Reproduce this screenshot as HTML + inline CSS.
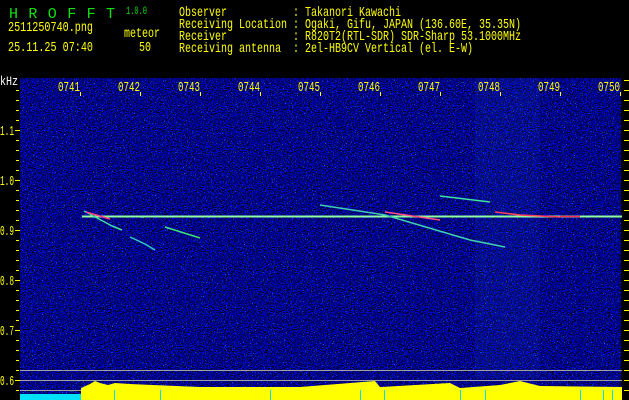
<!DOCTYPE html>
<html><head><meta charset="utf-8"><style>
html,body{margin:0;padding:0;background:#000;width:629px;height:400px;overflow:hidden}
svg{display:block}
text{font-family:"Liberation Mono","DejaVu Sans Mono",monospace;font-size:14px}
</style></head><body>
<svg width="629" height="400" xmlns="http://www.w3.org/2000/svg">
<defs>
<filter id="n" x="0" y="0" width="100%" height="100%">
<feTurbulence type="fractalNoise" baseFrequency="0.95" numOctaves="1" seed="3" result="t"/>
<feColorMatrix type="matrix" values="0 0 0 0 0.0  0 0 0 0 0.0  3.5 0 0 0 -1.45  0 0 0 0 1"/>
</filter>
<filter id="s" x="0" y="0" width="100%" height="100%">
<feTurbulence type="fractalNoise" baseFrequency="0.9" numOctaves="1" seed="11"/>
<feColorMatrix type="matrix" values="0 0 0 0 0  0 0 0 0 0.7  0 0 0 0 1  0 8 0 0 -5.2"/>
</filter>
</defs>
<rect x="20" y="78" width="601" height="322" fill="#03032a"/>
<rect x="20" y="78" width="601" height="322" filter="url(#n)"/>
<rect x="20" y="78" width="601" height="322" filter="url(#s)" opacity="0.8"/>
<rect x="475" y="78" width="65" height="300" fill="#3050d0" opacity="0.12"/>
<text x="9" y="18" fill="#10e010" style="font-size:15px" textLength="106" lengthAdjust="spacing">HROFFT</text>
<text x="126" y="14" fill="#10e010" style="font-size:11px" textLength="21" lengthAdjust="spacingAndGlyphs">1.0.0</text>
<g fill="#ffff00">
<text x="8" y="31" textLength="85" lengthAdjust="spacingAndGlyphs">2511250740.png</text>
<text x="8" y="51" textLength="85" lengthAdjust="spacingAndGlyphs">25.11.25 07:40</text>
<text x="124" y="37" textLength="36" lengthAdjust="spacingAndGlyphs">meteor</text>
<text x="139" y="51" textLength="12" lengthAdjust="spacingAndGlyphs">50</text>
<text x="179" y="16" textLength="48" lengthAdjust="spacingAndGlyphs">Observer</text><text x="293" y="16" textLength="108" lengthAdjust="spacingAndGlyphs">: Takanori Kawachi</text>
<text x="179" y="28" textLength="108" lengthAdjust="spacingAndGlyphs">Receiving Location</text><text x="293" y="28" textLength="228" lengthAdjust="spacingAndGlyphs">: Ogaki, Gifu, JAPAN (136.60E, 35.35N)</text>
<text x="179" y="40" textLength="48" lengthAdjust="spacingAndGlyphs">Receiver</text><text x="293" y="40" textLength="228" lengthAdjust="spacingAndGlyphs">: R820T2(RTL-SDR) SDR-Sharp 53.1000MHz</text>
<text x="179" y="52" textLength="102" lengthAdjust="spacingAndGlyphs">Receiving antenna</text><text x="293" y="52" textLength="180" lengthAdjust="spacingAndGlyphs">: 2el-HB9CV Vertical (el. E-W)</text>
</g>
<text x="0" y="85" fill="#fff" style="font-size:13px" textLength="18" lengthAdjust="spacingAndGlyphs">kHz</text>
<g fill="#ffff00" style="font-size:13px">
<text x="58" y="91" textLength="22" lengthAdjust="spacingAndGlyphs">0741</text><text x="118" y="91" textLength="22" lengthAdjust="spacingAndGlyphs">0742</text><text x="178" y="91" textLength="22" lengthAdjust="spacingAndGlyphs">0743</text><text x="238" y="91" textLength="22" lengthAdjust="spacingAndGlyphs">0744</text><text x="298" y="91" textLength="22" lengthAdjust="spacingAndGlyphs">0745</text>
<text x="358" y="91" textLength="22" lengthAdjust="spacingAndGlyphs">0746</text><text x="418" y="91" textLength="22" lengthAdjust="spacingAndGlyphs">0747</text><text x="478" y="91" textLength="22" lengthAdjust="spacingAndGlyphs">0748</text><text x="538" y="91" textLength="22" lengthAdjust="spacingAndGlyphs">0749</text><text x="598" y="91" textLength="22" lengthAdjust="spacingAndGlyphs">0750</text>
<text x="0" y="135" textLength="14" lengthAdjust="spacingAndGlyphs">1.1</text><text x="0" y="185" textLength="14" lengthAdjust="spacingAndGlyphs">1.0</text><text x="0" y="235" textLength="14" lengthAdjust="spacingAndGlyphs">0.9</text><text x="0" y="285" textLength="14" lengthAdjust="spacingAndGlyphs">0.8</text><text x="0" y="335" textLength="14" lengthAdjust="spacingAndGlyphs">0.7</text><text x="0" y="385" textLength="14" lengthAdjust="spacingAndGlyphs">0.6</text>
</g>
<g stroke="#ffff00" stroke-width="1">
<path d="M15 130.5h5M15 180.5h5M15 230.5h5M15 280.5h5M15 330.5h5M15 380.5h5"/>
<path d="M16 90.5h3M16 100.5h3M16 110.5h3M16 120.5h3M16 140.5h3M16 150.5h3M16 160.5h3M16 170.5h3M16 190.5h3M16 200.5h3M16 210.5h3M16 220.5h3M16 240.5h3M16 250.5h3M16 260.5h3M16 270.5h3M16 290.5h3M16 300.5h3M16 310.5h3M16 320.5h3M16 340.5h3M16 350.5h3M16 360.5h3M16 370.5h3M16 390.5h3"/>
<path d="M624 80.5h5M624 90.5h5M624 100.5h5M624 110.5h5M624 120.5h5M624 130.5h5M624 140.5h5M624 150.5h5M624 160.5h5M624 170.5h5M624 180.5h5M624 190.5h5M624 200.5h5M624 210.5h5M624 220.5h5M624 230.5h5M624 240.5h5M624 250.5h5M624 260.5h5M624 270.5h5M624 280.5h5M624 290.5h5M624 300.5h5M624 310.5h5M624 320.5h5M624 330.5h5M624 340.5h5M624 350.5h5M624 360.5h5M624 370.5h5M624 380.5h5M624 390.5h5"/>
<path d="M80.5 92v4M140.5 92v4M200.5 92v4M260.5 92v4M320.5 92v4M380.5 92v4M440.5 92v4M500.5 92v4M560.5 92v4M620.5 92v4"/>
</g>
<g fill="none" stroke-width="1.5">
<path d="M82 216.5H622" stroke="#90ffa0" stroke-width="2"/>
<path d="M84 211L112 226L122 230" stroke="#40e0a0"/>
<path d="M86 212L110 219" stroke="#ff4080"/>
<path d="M130 237L145 244L155 250" stroke="#30d0c0"/>
<path d="M165 227L200 238" stroke="#40e080"/>
<path d="M320 205L385 215L470 240L505 247" stroke="#40d0b0"/>
<path d="M385 212L440 220" stroke="#ff5080"/>
<path d="M495 212L520 215L560 217" stroke="#ff4060"/>
<path d="M560 216.5H580" stroke="#ff3050"/>
<path d="M440 196L490 202" stroke="#40e0a0"/>
</g>
<g stroke="#a0a0a0" stroke-width="1"><path d="M20 370.5H622M20 380.5H622M20 390.5H622"/></g>
<rect x="20" y="394" width="61" height="6" fill="#00e0ff"/>
<path d="M81 400V388L90 384L95 381L100 383L108 385L115 383L130 384L200 387L300 387L375 381L380 387L450 383L460 388L500 385L520 381L540 386L622 387V400Z" fill="#ffff00"/>
<g stroke="#00e0ff" stroke-width="1"><path d="M114.5 390v10M160.5 390v10M270.5 390v10M360.5 390v10M384.5 390v10M460.5 390v10M485.5 390v10M580.5 390v10M603.5 390v10M612.5 390v10"/></g>
</svg>
</body></html>
